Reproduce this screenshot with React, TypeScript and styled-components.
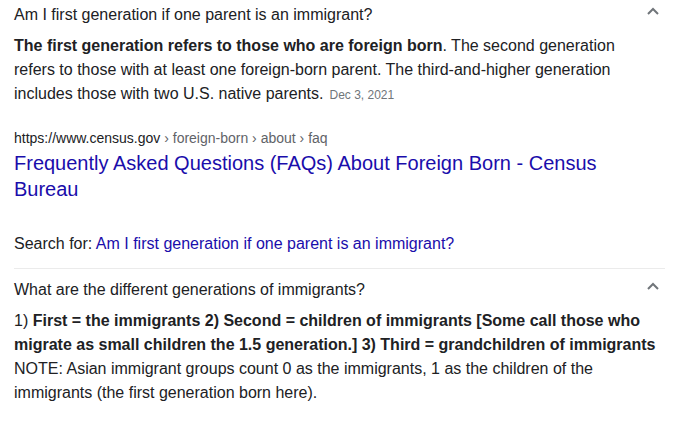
import { FC } from "react";
import styled, { createGlobalStyle } from "styled-components";

const GlobalStyle = createGlobalStyle`
  body {
    margin: 0;
    background: #ffffff;
    font-family: Arial, "Liberation Sans", sans-serif;
    color: #202124;
  }
`;

const Page = styled.div`
  width: 651px;
  padding: 0 0 0 14px;
`;

const Section = styled.div<{ $divider?: boolean }>`
  border-top: ${(p) => (p.$divider ? "1px solid #ebebeb" : "none")};
  padding-top: ${(p) => (p.$divider ? "9px" : "3px")};
`;

const QuestionRow = styled.div`
  display: flex;
  align-items: center;
  justify-content: space-between;
  font-size: 16px;
  line-height: 24px;
  padding-right: 5px;
`;

const Chevron = styled.svg`
  width: 14px;
  height: 10px;
  margin-top: -8px;
  flex-shrink: 0;
`;

const Answer = styled.div<{ $width: number }>`
  margin-top: 7px;
  font-size: 16px;
  line-height: 24px;
  width: ${(p) => p.$width}px;
`;

const DateStamp = styled.span`
  font-size: 12px;
  color: #70757a;
  margin-left: 6px;
`;

const Source = styled.div`
  margin-top: 20px;
  font-size: 14px;
  line-height: 22px;
  color: #202124;
`;

const Crumbs = styled.span`
  color: #5f6368;
`;

const TitleLink = styled.a`
  display: block;
  margin-top: 1px;
  font-size: 20px;
  line-height: 26px;
  color: #1a0dab;
  text-decoration: none;
  width: 600px;
`;

const SearchFor = styled.div`
  margin-top: 30px;
  margin-bottom: 12px;
  font-size: 16px;
  line-height: 24px;
`;

const SearchLink = styled.a`
  color: #1a0dab;
  text-decoration: none;
`;

const ChevronUp: FC = () => (
  <Chevron viewBox="0 0 14 10" fill="none">
    <path d="M2 8 L7 3 L12 8" stroke="#70757a" strokeWidth="2" />
  </Chevron>
);

const App: FC = () => {
  return (
    <Page>
      <GlobalStyle />
      <Section>
        <QuestionRow>
          <span>Am I first generation if one parent is an immigrant?</span>
          <ChevronUp />
        </QuestionRow>
        <Answer $width={620}>
          <b>The first generation refers to those who are foreign born</b>. The
          second generation refers to those with at least one foreign-born
          parent. The third-and-higher generation includes those with two U.S.
          native parents.
          <DateStamp>Dec 3, 2021</DateStamp>
        </Answer>
        <Source>
          https://www.census.gov<Crumbs> › foreign-born › about › faq</Crumbs>
        </Source>
        <TitleLink href="#">
          Frequently Asked Questions (FAQs) About Foreign Born - Census Bureau
        </TitleLink>
        <SearchFor>
          Search for:{" "}
          <SearchLink href="#">
            Am I first generation if one parent is an immigrant?
          </SearchLink>
        </SearchFor>
      </Section>
      <Section $divider>
        <QuestionRow>
          <span>What are the different generations of immigrants?</span>
          <ChevronUp />
        </QuestionRow>
        <Answer $width={648}>
          1){" "}
          <b>
            First = the immigrants 2) Second = children of immigrants [Some call
            those who migrate as small children the 1.5 generation.] 3) Third =
            grandchildren of immigrants
          </b>
          <br />
          NOTE: Asian immigrant groups count 0 as the immigrants, 1 as the
          children of the immigrants (the first generation born here).
        </Answer>
      </Section>
    </Page>
  );
};

export default App;
